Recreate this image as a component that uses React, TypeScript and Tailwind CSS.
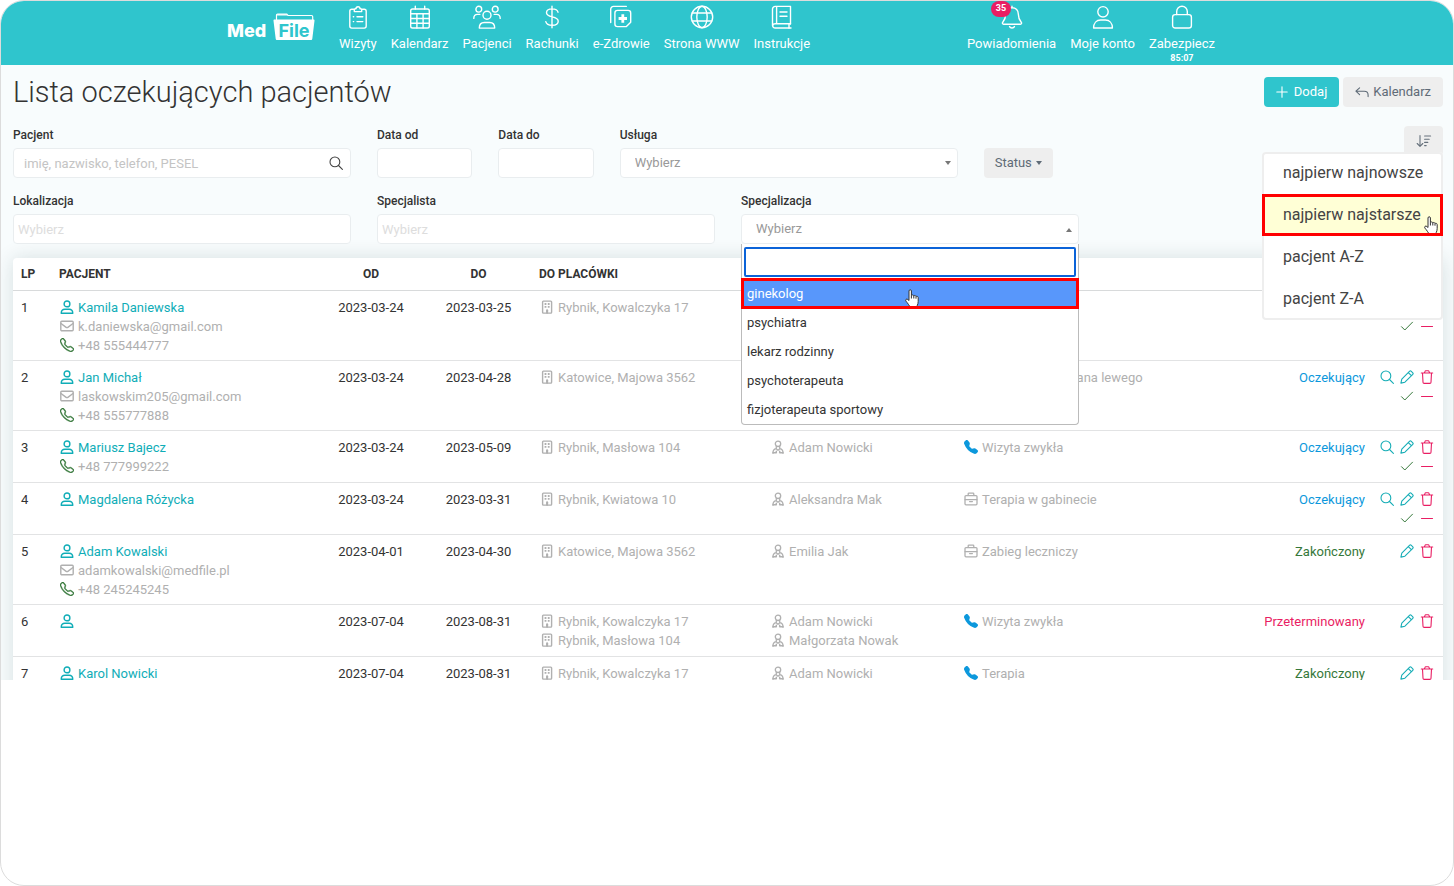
import React from "react";
import { BsTelephone, BsTelephoneFill } from "react-icons/bs";

type IconProps = { className?: string };

function Line({
  w = 24,
  h = 24,
  sw = 1.4,
  className = "",
  children,
}: {
  w?: number;
  h?: number;
  sw?: number;
  className?: string;
  children: React.ReactNode;
}) {
  return (
    <svg
      width={w}
      height={h}
      viewBox={`0 0 ${w} ${h}`}
      fill="none"
      stroke="currentColor"
      strokeWidth={sw}
      strokeLinecap="round"
      strokeLinejoin="round"
      className={`shrink-0 ${className}`}
      aria-hidden="true"
    >
      {children}
    </svg>
  );
}

/* Top navigation icons */

const ClipboardIcon = () => (
  <Line>
    <path d="M7.6 4.2H5.8a2 2 0 0 0-2 2v14.9a2 2 0 0 0 2 2h12.4a2 2 0 0 0 2-2V6.200a2 2 0 0 0-2-2h-1.800" />
    <path d="M8.300 6.600V4.800c0-.6.4-1 1-1h.700a2 2 0 0 1 4 0h.700c.6 0 1 .4 1 1v1.800z" />
    <path d="M7.300 11.800h.4M7.300 16.600h.4M11 11.800h5.800M11 16.600h5.800" />
  </Line>
);

const CalendarIcon = () => (
  <Line>
    <rect x="2.700" y="4" width="18.600" height="19" rx="1.800" />
    <path d="M2.700 8.800h18.600M2.700 13.500h18.600M2.700 18.200h18.600M8.900 8.800V23M15.100 8.800V23M7.300 1.200V4M16.700 1.200V4" />
  </Line>
);

const PeopleIcon = () => (
  <Line w={28} h={24}>
    <circle cx="5.800" cy="4.200" r="2.900" />
    <circle cx="22.200" cy="4.200" r="2.900" />
    <circle cx="14" cy="10.200" r="4" />
    <path d="M.8 13.400c0-2.500 1.500-4 3.700-4h2.300M27.200 13.400c0-2.500-1.500-4-3.700-4h-2.300" />
    <path d="M6.300 23.100c0-3.400 2-5.600 5-5.600h5.400c3 0 5 2.200 5 5.600z" />
  </Line>
);

const DollarIcon = () => (
  <Line>
    <path d="M12 1.200v21.600M18 7.200c-.5-2.200-2.700-3.300-5.800-3.300-3.400 0-5.700 1.400-5.700 3.900 0 2.600 2.400 3.300 5.700 4.100 3.500.8 6 1.700 6 4.300 0 2.700-2.500 4.100-6 4.100-3.300 0-5.800-1.200-6.400-3.700" />
  </Line>
);

const HealthIcon = () => (
  <Line>
    <path d="M1.700 17.500V4.200a2.800 2.800 0 0 1 2.800-2.800h12.800" />
    <path d="M8.500 5.400h10.600a2.600 2.600 0 0 1 2.600 2.600v9.300l-4.300 4.300H8.500a2.600 2.600 0 0 1-2.600-2.600V8a2.600 2.600 0 0 1 2.600-2.600z" />
    <path d="M13.800 9.300v8.400M9.600 13.500h8.400" strokeWidth="2.800" strokeLinecap="butt" />
  </Line>
);

const GlobeIcon = () => (
  <Line>
    <circle cx="12" cy="12" r="10.700" />
    <ellipse cx="12" cy="12" rx="5.200" ry="10.700" />
    <path d="M2.300 8h19.400M2.300 16h19.400" />
  </Line>
);

const BookIcon = () => (
  <Line>
    <path d="M20.500 19V1.400H5.200a2.700 2.700 0 0 0-2.700 2.700v16.200a2.700 2.700 0 0 0 2.700 2.700h15.800" />
    <path d="M2.600 20.500c.2-1 1.200-1.700 2.600-1.700h15.300M19 19v4M6.600 1.600v17.200M10 7h7M10 11.200h7" />
  </Line>
);

const BellIcon = () => (
  <Line>
    <path d="M12 1.200v1.600M12 2.800c-4 0-6.300 2.700-6.300 6.300 0 4.700-1.500 6.400-3 8.200-.6.800-.2 1.900.8 1.900h17c1 0 1.400-1.100.8-1.900-1.500-1.800-3-3.500-3-8.200 0-3.600-2.300-6.300-6.300-6.300zM9.600 21.600c.4.900 1.300 1.400 2.400 1.400s2-.5 2.400-1.400" />
  </Line>
);

const AccountIcon = () => (
  <Line>
    <circle cx="12" cy="6.800" r="5.200" />
    <path d="M2.600 23c0-5 3-8 7-8h4.800c4 0 7 3 7 8z" />
  </Line>
);

const LockIcon = () => (
  <Line>
    <rect x="2.600" y="9.600" width="18.800" height="13.400" rx="2.600" />
    <path d="M6.700 9.600V6.500a5.300 5.300 0 0 1 10.600 0v3.100" />
  </Line>
);

/* Small icons */

const UserIcon = () => (
  <Line w={14} h={14} sw={1.4}>
    <circle cx="7" cy="3.900" r="2.900" />
    <path d="M1.200 13.200c.1-2.600 1.500-3.900 3.700-3.900h4.200c2.200 0 3.600 1.300 3.700 3.900z" />
  </Line>
);

const MailIcon = () => (
  <Line w={14} h={14} sw={1.4}>
    <rect x=".8" y="2.200" width="12.400" height="9.600" rx="1" />
    <path d="M1 4.500l4.800 3.600c.7.500 1.700.5 2.400 0L13 4.500" />
  </Line>
);

const BuildingIcon = () => (
  <Line w={14} h={14} sw={1.4}>
    <rect x="2.600" y="1.100" width="9" height="12" rx=".8" />
    <path
      d="M4.600 4h1.800M7.800 4h1.800M4.600 6.900h1.800M7.800 6.900h1.800"
      strokeWidth="1.900"
      strokeLinecap="butt"
    />
    <path d="M7.100 10.200v2.600" strokeWidth="2.100" />
  </Line>
);

const DoctorIcon = () => (
  <Line w={14} h={14} sw={1.3}>
    <circle cx="7" cy="3.800" r="2.700" />
    <path d="M2 13.300c-.2-2.800 1.400-4.300 3.200-4.600L7 10.300l1.800-1.600c1.800.3 3.400 1.800 3.200 4.600M5.300 6.500v1.900M8.700 6.500v1.900" />
    <path d="M2 12.800h3.300v-1.500M8.700 11.300v1.500H12" strokeWidth="1.500" />
  </Line>
);

const CaseIcon = () => (
  <Line w={14} h={14} sw={1.3}>
    <rect x="1" y="3.600" width="12" height="9.200" rx="1" />
    <path d="M4.200 3.400V1.900c0-.5.3-.8.8-.8h4c.5 0 .8.300.8.800v1.500M1.100 7.600h11.800M5.600 9.600h2.800" />
  </Line>
);

const SearchIcon = () => (
  <Line w={14} h={14} sw={1.1}>
    <circle cx="5.900" cy="5.900" r="4.900" />
    <path d="M9.500 9.500l3.900 3.900" />
  </Line>
);

const PencilIcon = () => (
  <Line w={14} h={14} sw={1.1}>
    <path d="M.9 13.100l.9-4L9.700 1.200c.4-.4 1-.4 1.400 0l1.700 1.700c.4.400.4 1 0 1.400l-7.900 7.900zM8.300 2.600l3.100 3.100" />
  </Line>
);

const TrashIcon = () => (
  <Line w={14} h={14} sw={1.1}>
    <path d="M1.300 3h11.400M2.500 3l.5 9.200c0 .7.500 1.200 1.200 1.200h5.600c.7 0 1.200-.5 1.200-1.200L11.500 3M4.300 2.900l.8-1.700c.1-.3.300-.4.600-.4h2.600c.3 0 .5.100.6.400l.8 1.700" />
  </Line>
);

const CheckIcon = () => (
  <Line w={14} h={14} sw={1}>
    <path d="M1.500 7.700l3.300 3.300 7.700-7.800" />
  </Line>
);

const MinusIcon = () => (
  <Line w={14} h={14} sw={1.1}>
    <path d="M1.500 7.500h11" />
  </Line>
);

const PlusIcon = () => (
  <Line w={12} h={12} sw={1.1}>
    <path d="M6 .8v10.400M.8 6h10.400" />
  </Line>
);

const ReplyIcon = () => (
  <Line w={14} h={12} sw={1.1}>
    <path d="M4.600 1.800L.9 5.200l3.700 3.400M1.200 5.200h8c2.200 0 3.900 1.500 3.900 3.700v1.700" />
  </Line>
);

const SortIcon = () => (
  <Line w={16} h={14} sw={1.1}>
    <path d="M4 1.600v10.600M1.200 9.500L4 12.300l2.800-2.800M8.600 2h6M8.600 5.200h4.600M8.600 8.400h3.200M8.600 11.600h1.600" />
  </Line>
);

function Caret({ up = false, className = "" }: IconProps & { up?: boolean }) {
  return (
    <svg width="6" height="4" viewBox="0 0 6 4" className={className} aria-hidden="true">
      <path d={up ? "M0 4L3 0l3 4z" : "M0 0h6L3 4z"} fill="currentColor" />
    </svg>
  );
}

function HandCursor({ className = "" }: IconProps) {
  return (
    <svg width="14" height="19" viewBox="0 0 14 19" className={className} aria-hidden="true">
      <path
        d="M4 11.500V2c0-1.700 2.400-1.700 2.400 0v4.500c.4-.8 2.200-.8 2.400.4.500-.7 2-.5 2.200.6.700-.5 2.200-.2 2.200 1.200v3.800c0 2.600-1.600 5.700-2.400 6H5.300C4.700 17 2.300 13.700 1 12.200c-1.200-1.400.6-2.900 1.900-1.700z"
        fill="#fff"
        stroke="#333"
        strokeWidth="1"
        strokeLinejoin="round"
      />
      <path d="M6.400 6.500v3M8.800 7v2.500M11 7.700v2" stroke="#333" strokeWidth="1" />
    </svg>
  );
}

function Logo() {
  return (
    <a
      href="#"
      aria-label="MedFile"
      className="mt-3 flex h-7 w-[88px] items-start justify-between font-['Inter',sans-serif] text-lg leading-7 font-bold text-white"
    >
      <span className="pt-1 font-extrabold">Med</span>
      <span className="relative flex h-7 w-[42px] justify-center">
        <svg
          viewBox="0 0 42 28"
          width="42"
          height="28"
          className="absolute inset-0"
          aria-hidden="true"
        >
          <path
            d="M3.500 8V2.200c0-.6.400-1 1-1h9.300l1.200 1.300h23.500c.7 0 1.200.5 1.200 1.200V8"
            fill="none"
            stroke="#fff"
            strokeWidth="1.200"
          />
          <path d="M4.500 1.200h9.300l1 1.300H4z" fill="#fff" />
          <path
            d="M1.500 6.500h39c.7 0 1.100.5 1 1.200l-2.200 18c-.1.800-.6 1.300-1.400 1.300H4.100c-.8 0-1.300-.5-1.400-1.300L.5 7.700c-.1-.7.300-1.200 1-1.200z"
            fill="#fff"
          />
        </svg>
        <span className="relative pt-1 text-[#2fc5cd]">File</span>
      </span>
    </a>
  );
}

const mainNav = [
  { label: "Wizyty", icon: <ClipboardIcon /> },
  { label: "Kalendarz", icon: <CalendarIcon /> },
  { label: "Pacjenci", icon: <PeopleIcon /> },
  { label: "Rachunki", icon: <DollarIcon /> },
  { label: "e-Zdrowie", icon: <HealthIcon /> },
  { label: "Strona WWW", icon: <GlobeIcon /> },
  { label: "Instrukcje", icon: <BookIcon /> },
];

function NavItem({
  label,
  icon,
  badge,
  note,
}: {
  label: string;
  icon: React.ReactNode;
  badge?: string;
  note?: string;
}) {
  return (
    <a href="#" className="relative flex flex-col items-center whitespace-nowrap">
      {icon}
      {badge && (
        <span className="absolute -top-1 left-6 flex h-4 w-5 items-center justify-center rounded-full bg-[#e91e63] text-[9px] font-bold">
          {badge}
        </span>
      )}
      <span className="mt-[5px] leading-5">{label}</span>
      {note && <span className="text-[9px] leading-2 font-bold">{note}</span>}
    </a>
  );
}

function TopBar() {
  return (
    <header className="h-16 bg-[#2fc5cd] text-[13px] text-white">
      <div className="mx-auto flex max-w-[1000px] items-start justify-between pr-3">
        <div className="flex items-start gap-6">
          <Logo />
          <nav className="flex gap-3.5 pt-1">
            {mainNav.map((n) => (
              <NavItem key={n.label} {...n} />
            ))}
          </nav>
        </div>
        <nav className="flex gap-3.5 pt-1">
          <NavItem label="Powiadomienia" icon={<BellIcon />} badge="35" />
          <NavItem label="Moje konto" icon={<AccountIcon />} />
          <NavItem label="Zabezpiecz" icon={<LockIcon />} note="85:07" />
        </nav>
      </div>
    </header>
  );
}

const fieldBox =
  "h-[30px] w-full rounded-[4px] border border-[#e9edef] bg-white outline-none";

function Field({
  id,
  label,
  className,
  children,
}: {
  id: string;
  label: string;
  className: string;
  children: React.ReactNode;
}) {
  return (
    <div className={`flex flex-col gap-[3px] ${className}`}>
      <label htmlFor={id} className="text-xs leading-5 font-medium text-[#333]">
        {label}
      </label>
      <div className="relative">{children}</div>
    </div>
  );
}

const sortOptions = ["najpierw najnowsze", "najpierw najstarsze", "pacjent A-Z", "pacjent Z-A"];

function SortMenu() {
  return (
    <div className="relative col-span-2 flex items-start justify-end">
      <button
        type="button"
        aria-label="Sortuj"
        className="mt-px flex h-[30px] w-[39px] items-center justify-center rounded-[4px] bg-[#eee] text-[#66717c]"
      >
        <SortIcon />
      </button>
      <ul className="absolute top-[27px] right-0 z-20 w-[181px] rounded-[4px] bg-white text-base text-[#444] ring-2 ring-[#eee] ring-inset">
        {sortOptions.map((o, i) => (
          <li key={o}>
            <button
              type="button"
              className={
                i === 1
                  ? "relative flex h-[42px] w-full items-center overflow-hidden border-3 border-[#f00] bg-[#ffffd6] pl-[18px] whitespace-nowrap"
                  : "flex h-[42px] w-full items-center pl-[21px] whitespace-nowrap"
              }
            >
              {o}
              {i === 1 && <HandCursor className="absolute right-0.5 -bottom-0.5" />}
            </button>
          </li>
        ))}
      </ul>
    </div>
  );
}

const specialties = [
  "ginekolog",
  "psychiatra",
  "lekarz rodzinny",
  "psychoterapeuta",
  "fizjoterapeuta sportowy",
];

function SpecialtyPopup() {
  return (
    <div className="absolute top-full left-0 z-10 w-full rounded-b-[4px] border border-t-0 border-[#bbb] bg-white">
      <div className="px-0.5 pt-[3px] pb-0.5">
        <input
          type="text"
          aria-label="Szukaj specjalizacji"
          className="block h-[30px] w-full rounded-[2px] border-2 border-[#0b63d8] bg-white px-1 outline-none"
        />
      </div>
      <ul role="listbox" aria-label="Specjalizacja" className="text-[#333]">
        {specialties.map((s, i) => (
          <li
            key={s}
            role="option"
            aria-selected={i === 0}
            className={
              i === 0
                ? "relative h-[29px] bg-[#5897fb] px-[5px] leading-[29px] text-white outline-3 -outline-offset-2 outline-[#f00]"
                : "h-[29px] px-[5px] leading-[29px]"
            }
          >
            {s}
            {i === 0 && (
              <span className="absolute inset-0.5 flex justify-center overflow-hidden pt-2 pl-1">
                <HandCursor className="shrink-0" />
              </span>
            )}
          </li>
        ))}
      </ul>
    </div>
  );
}

function Filters() {
  return (
    <form className="mt-[18px] grid grid-cols-12 gap-x-[26px] gap-y-[13px]">
      <Field id="patient" label="Pacjent" className="col-span-3">
        <input
          id="patient"
          type="text"
          placeholder="imię, nazwisko, telefon, PESEL"
          className={`${fieldBox} pr-8 pl-2.5 placeholder:text-[#c4c4c4]`}
        />
        <span className="absolute top-2 right-2 text-[#444]">
          <SearchIcon />
        </span>
      </Field>
      <Field id="from" label="Data od" className="col-span-1">
        <input id="from" type="text" className={fieldBox} />
      </Field>
      <Field id="to" label="Data do" className="col-span-1">
        <input id="to" type="text" className={fieldBox} />
      </Field>
      <Field id="service" label="Usługa" className="col-span-3">
        <select id="service" className={`${fieldBox} appearance-none px-3.5 text-[#999]`}>
          <option>Wybierz</option>
        </select>
        <Caret className="absolute top-[13px] right-[7px] text-[#777]" />
      </Field>
      <div className="col-span-2 flex items-end">
        <button
          type="button"
          className="flex h-[30px] items-center gap-1 rounded-[4px] bg-[#eee] px-[11px] text-[#5f6b77]"
        >
          Status
          <Caret />
        </button>
      </div>
      <SortMenu />
      <Field id="location" label="Lokalizacja" className="col-span-3">
        <input
          id="location"
          type="text"
          placeholder="Wybierz"
          className={`${fieldBox} px-1 placeholder:text-[#ddd]`}
        />
      </Field>
      <Field id="specialist" label="Specjalista" className="col-span-3">
        <input
          id="specialist"
          type="text"
          placeholder="Wybierz"
          className={`${fieldBox} px-1 placeholder:text-[#ddd]`}
        />
      </Field>
      <Field id="specialty" label="Specjalizacja" className="col-span-3">
        <select id="specialty" className={`${fieldBox} appearance-none px-3.5 text-[#999]`}>
          <option>Wybierz</option>
        </select>
        <Caret up className="absolute top-3.5 right-[7px] text-[#777]" />
        <SpecialtyPopup />
      </Field>
    </form>
  );
}

type Status = "Oczekujący" | "Zakończony" | "Przeterminowany";

type Row = {
  name: string;
  email?: string;
  phone?: string;
  from: string;
  to: string;
  places: string[];
  doctors: string[];
  service?: string;
  remote?: boolean;
  status?: Status;
};

const rows: Row[] = [
  {
    name: "Kamila Daniewska",
    email: "k.daniewska@gmail.com",
    phone: "+48 555444777",
    from: "2023-03-24",
    to: "2023-03-25",
    places: ["Rybnik, Kowalczyka 17"],
    doctors: [],
  },
  {
    name: "Jan Michał",
    email: "laskowskim205@gmail.com",
    phone: "+48 555777888",
    from: "2023-03-24",
    to: "2023-04-28",
    places: ["Katowice, Majowa 3562"],
    doctors: [],
    service: "Rehabilitacja kolana lewego",
    status: "Oczekujący",
  },
  {
    name: "Mariusz Bajecz",
    phone: "+48 777999222",
    from: "2023-03-24",
    to: "2023-05-09",
    places: ["Rybnik, Masłowa 104"],
    doctors: ["Adam Nowicki"],
    service: "Wizyta zwykła",
    remote: true,
    status: "Oczekujący",
  },
  {
    name: "Magdalena Różycka",
    from: "2023-03-24",
    to: "2023-03-31",
    places: ["Rybnik, Kwiatowa 10"],
    doctors: ["Aleksandra Mak"],
    service: "Terapia w gabinecie",
    status: "Oczekujący",
  },
  {
    name: "Adam Kowalski",
    email: "adamkowalski@medfile.pl",
    phone: "+48 245245245",
    from: "2023-04-01",
    to: "2023-04-30",
    places: ["Katowice, Majowa 3562"],
    doctors: ["Emilia Jak"],
    service: "Zabieg leczniczy",
    status: "Zakończony",
  },
  {
    name: "",
    from: "2023-07-04",
    to: "2023-08-31",
    places: ["Rybnik, Kowalczyka 17", "Rybnik, Masłowa 104"],
    doctors: ["Adam Nowicki", "Małgorzata Nowak"],
    service: "Wizyta zwykła",
    remote: true,
    status: "Przeterminowany",
  },
  {
    name: "Karol Nowicki",
    from: "2023-07-04",
    to: "2023-08-31",
    places: ["Rybnik, Kowalczyka 17"],
    doctors: ["Adam Nowicki"],
    service: "Terapia",
    remote: true,
    status: "Zakończony",
  },
];

const statusColor: Record<Status, string> = {
  Oczekujący: "text-[#0c98dc]",
  Zakończony: "text-[#35783a]",
  Przeterminowany: "text-[#e91e63]",
};

function Entry({ icon, children }: { icon: React.ReactNode; children?: React.ReactNode }) {
  return (
    <div className="flex h-[19px] items-center gap-1 whitespace-nowrap">
      {icon}
      <span>{children}</span>
    </div>
  );
}

function Action({
  label,
  color,
  children,
}: {
  label: string;
  color: string;
  children: React.ReactNode;
}) {
  return (
    <button type="button" aria-label={label} className={color}>
      {children}
    </button>
  );
}

function Actions({ status }: { status?: Status }) {
  const waiting = status === undefined || status === "Oczekujący";
  return (
    <>
      <div className="flex h-[19px] items-center justify-end gap-1.5">
        {waiting && (
          <Action label="Podgląd" color="text-[#16adb6]">
            <SearchIcon />
          </Action>
        )}
        <Action label="Edytuj" color="text-[#16adb6]">
          <PencilIcon />
        </Action>
        <Action label="Usuń" color="text-[#e91e63]">
          <TrashIcon />
        </Action>
      </div>
      {waiting && (
        <div className="flex h-[19px] items-center justify-end gap-1.5">
          <Action label="Zatwierdź" color="text-[#35783a]">
            <CheckIcon />
          </Action>
          <Action label="Odrzuć" color="text-[#e91e63]">
            <MinusIcon />
          </Action>
        </div>
      )}
    </>
  );
}

function PatientTable() {
  return (
    <div className="mt-3.5 rounded-t-[4px] bg-white shadow-[0_0_20px_rgba(0,50,50,0.14)]">
      <table className="w-full table-fixed border-collapse text-left">
        <colgroup>
          <col className="w-[38px]" />
          <col className="w-[266px]" />
          <col className="w-[108px]" />
          <col className="w-[107px]" />
          <col className="w-[231px]" />
          <col className="w-[192px]" />
          <col className="w-[240px]" />
          <col />
          <col className="w-[70px]" />
        </colgroup>
        <thead>
          <tr className="h-8 border-b border-[#d8dadb] text-xs text-[#333] [&>th]:font-bold">
            <th className="pl-2">LP</th>
            <th className="pl-2">PACJENT</th>
            <th className="text-center">OD</th>
            <th className="text-center">DO</th>
            <th className="pl-[7px]">DO PLACÓWKI</th>
            <th />
            <th />
            <th />
            <th />
          </tr>
        </thead>
        <tbody>
          {rows.map((r, i) => (
            <tr
              key={i}
              className="h-[52px] border-b border-[#e2e3e4] align-top leading-[19px] [&>td]:pt-[7px] [&>td]:pb-[5px]"
            >
              <td className="pl-2 text-[#333]">{i + 1}</td>
              <td className="pl-[9px] text-[#b0b0b0]">
                <a href="#" className="block text-[#10adb7]">
                  <Entry icon={<UserIcon />}>{r.name}</Entry>
                </a>
                {r.email && <Entry icon={<MailIcon />}>{r.email}</Entry>}
                {r.phone && (
                  <Entry
                    icon={
                      <BsTelephone
                        size={14}
                        className="shrink-0 stroke-[#35783a] text-[#35783a] [stroke-width:0.5]"
                      />
                    }
                  >
                    {r.phone}
                  </Entry>
                )}
              </td>
              <td className="text-center text-[#333]">{r.from}</td>
              <td className="text-center text-[#333]">{r.to}</td>
              <td className="pl-2 text-[#b0b0b0]">
                {r.places.map((p) => (
                  <Entry key={p} icon={<BuildingIcon />}>
                    {p}
                  </Entry>
                ))}
              </td>
              <td className="pl-2 text-[#b0b0b0]">
                {r.doctors.map((d) => (
                  <Entry key={d} icon={<DoctorIcon />}>
                    {d}
                  </Entry>
                ))}
              </td>
              <td className="pl-[9px] text-[#b0b0b0]">
                {r.service && (
                  <Entry
                    icon={
                      r.remote ? (
                        <BsTelephoneFill size={14} className="shrink-0 text-[#0c98dc]" />
                      ) : (
                        <CaseIcon />
                      )
                    }
                  >
                    {r.service}
                  </Entry>
                )}
              </td>
              <td className={`pr-2 text-right ${r.status ? statusColor[r.status] : ""}`}>
                {r.status}
              </td>
              <td className="pr-[9px]">
                <Actions status={r.status} />
              </td>
            </tr>
          ))}
        </tbody>
      </table>
    </div>
  );
}

export default function App() {
  return (
    <div className="min-h-screen overflow-hidden rounded-[24px] border border-[#dcdcdc] bg-white font-['Roboto',sans-serif] text-[13px]">
      <div className="max-h-[679px] overflow-hidden bg-[#f8fcfd]">
        <TopBar />
        <main className="pt-3 pr-2.5 pl-3">
          <div className="flex h-[30px] items-center justify-between">
            <h1 className="text-[29px] leading-[30px] font-light text-[#333]">
              Lista oczekujących pacjentów
            </h1>
            <div className="flex gap-1">
              <button
                type="button"
                className="flex h-[30px] items-center gap-1.5 rounded-[4px] bg-[#2fc5cd] px-3 text-white"
              >
                <PlusIcon />
                Dodaj
              </button>
              <button
                type="button"
                className="flex h-[30px] items-center gap-1 rounded-[4px] bg-[#eee] px-3 text-[#5f6b77]"
              >
                <ReplyIcon />
                Kalendarz
              </button>
            </div>
          </div>
          <Filters />
          <PatientTable />
        </main>
      </div>
    </div>
  );
}
